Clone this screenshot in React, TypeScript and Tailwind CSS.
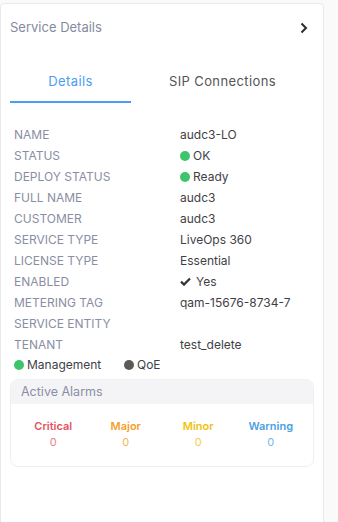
import React from "react";

const rows: { label: string; value: React.ReactNode }[] = [
  { label: "NAME", value: "audc3-LO" },
  { label: "STATUS", value: <Dot color="bg-[#3ec46d]" text="OK" /> },
  { label: "DEPLOY STATUS", value: <Dot color="bg-[#3ec46d]" text="Ready" /> },
  { label: "FULL NAME", value: "audc3" },
  { label: "CUSTOMER", value: "audc3" },
  { label: "SERVICE TYPE", value: "LiveOps 360" },
  { label: "LICENSE TYPE", value: "Essential" },
  {
    label: "ENABLED",
    value: (
      <span className="flex items-center gap-[5px]">
        <svg width="11" height="9" viewBox="0 0 11 9">
          <path d="M1 4.6 L4 7.6 L10 1.4" stroke="#333" strokeWidth="2.2" fill="none" />
        </svg>
        Yes
      </span>
    ),
  },
  { label: "METERING TAG", value: "qam-15676-8734-7" },
  { label: "SERVICE ENTITY", value: "" },
  { label: "TENANT", value: "test_delete" },
];

function Dot({ color, text }: { color: string; text: string }) {
  return (
    <span className="flex items-center gap-[3px]">
      <span className={`inline-block w-[10px] h-[10px] rounded-full ${color}`} />
      {text}
    </span>
  );
}

const alarms = [
  { name: "Critical", label: "text-[#e5515d]", count: "text-[#ec7f88]" },
  { name: "Major", label: "text-[#f5a02b]", count: "text-[#f7b457]" },
  { name: "Minor", label: "text-[#f0c30f]", count: "text-[#f2cd48]" },
  { name: "Warning", label: "text-[#4d9fe3]", count: "text-[#7ab5ea]" },
];

export default function App() {
  return (
    <div className="w-[338px] h-[522px] bg-[#fafafa] pt-[3px] overflow-hidden" style={{ fontFamily: "Inter, 'Noto Sans', sans-serif" }}>
      <div className="w-[324px] h-[530px] bg-white border border-[#e9e9ec] rounded-[4px]">
        <div className="flex items-center justify-between h-[48px] pl-[9px] pr-[15px]">
          <span className="text-[13px] text-[#868aa0]">Service Details</span>
          <svg width="8" height="12" viewBox="0 0 8 12">
            <path d="M1.5 1.5 L6 6 L1.5 10.5" stroke="#2d2d2d" strokeWidth="2" fill="none" />
          </svg>
        </div>

        <div className="flex mx-[9px] mt-[17px] h-[34px]">
          <div className="w-[121px] flex items-start justify-center pt-[3px] border-b-[2px] border-[#4a9cf5]">
            <span className="text-[13px] tracking-[0.4px] text-[#4a9cf5]">Details</span>
          </div>
          <div className="flex-1 flex items-start justify-center pt-[3px]">
            <span className="text-[13px] tracking-[0.4px] text-[#555]">SIP Connections</span>
          </div>
        </div>

        <div className="mt-[21px] px-[13px] flex flex-col text-[12px]">
          {rows.map((r) => (
            <div key={r.label} className="flex items-center h-[21px]">
              <span className="w-[166px] text-[#8a8ea4]">{r.label}</span>
              <span className="text-[#3f3f46]">{r.value}</span>
            </div>
          ))}
          <div className="flex items-center h-[20px] text-[#3f3f46]">
            <span className="w-[110px]">
              <Dot color="bg-[#3ec46d]" text="Management" />
            </span>
            <Dot color="bg-[#5a5a5a]" text="QoE" />
          </div>
        </div>

        <div className="mx-[9px] mt-[4px] border border-[#efeff2] rounded-[8px] overflow-hidden">
          <div className="bg-[#f4f4f7] h-[24px] flex items-center px-[10px]">
            <span className="text-[12.5px] text-[#8a8ea4]">Active Alarms</span>
          </div>
          <div className="grid grid-cols-4 px-[6px] pt-[15px] pb-[15px]">
            {alarms.map((a) => (
              <div key={a.name} className="flex flex-col items-center">
                <span className={`text-[11px] font-semibold leading-[15px] ${a.label}`}>{a.name}</span>
                <span className={`text-[11px] leading-[17px] ${a.count}`}>0</span>
              </div>
            ))}
          </div>
        </div>
      </div>
    </div>
  );
}
